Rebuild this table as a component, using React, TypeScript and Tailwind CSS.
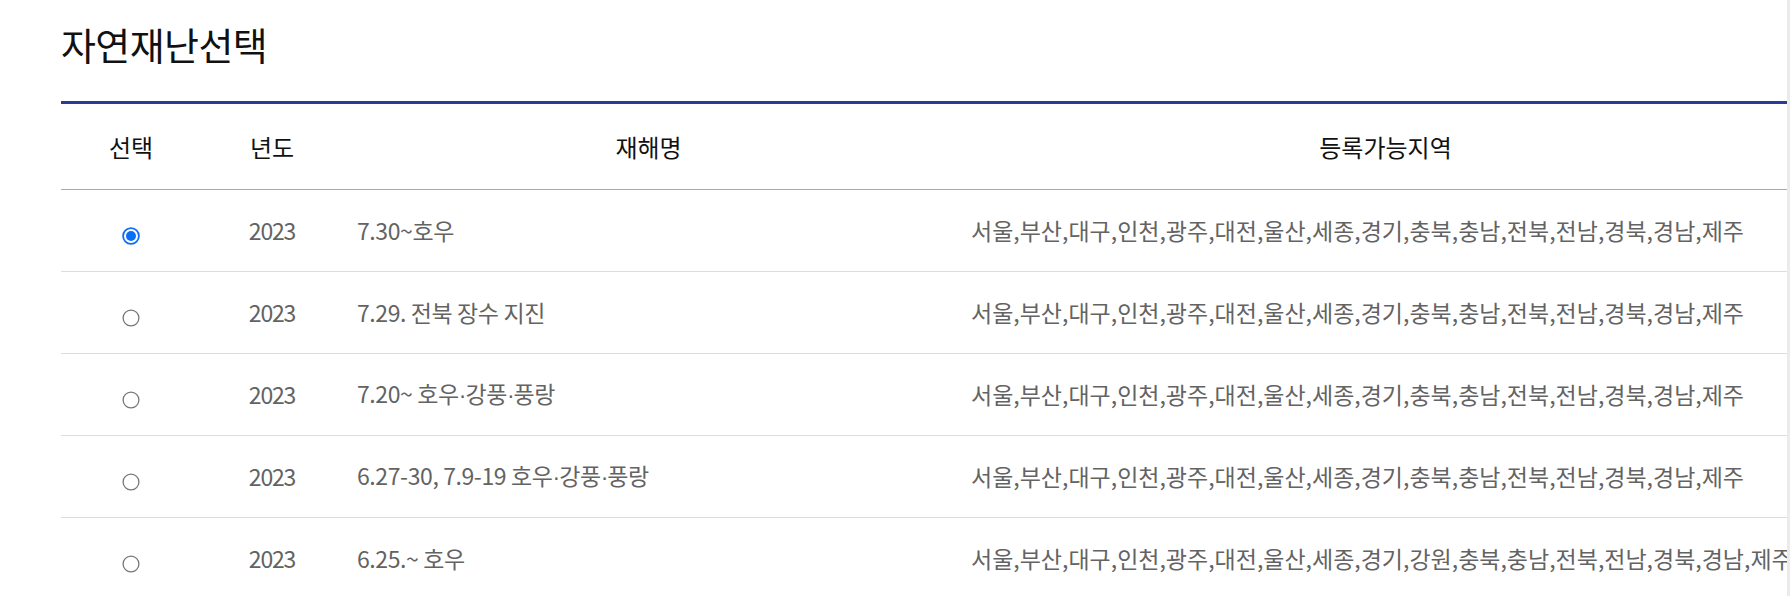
import React from "react";

const R1 = "서울,부산,대구,인천,광주,대전,울산,세종,경기,충북,충남,전북,전남,경북,경남,제주";
const R2 = "서울,부산,대구,인천,광주,대전,울산,세종,경기,강원,충북,충남,전북,전남,경북,경남,제주";

const rows = [
  { checked: true, year: "2023", name: "7.30~호우", regions: R1 },
  { checked: false, year: "2023", name: "7.29. 전북 장수 지진", regions: R1 },
  { checked: false, year: "2023", name: "7.20~ 호우·강풍·풍랑", regions: R1 },
  { checked: false, year: "2023", name: "6.27-30, 7.9-19 호우·강풍·풍랑", regions: R1 },
  { checked: false, year: "2023", name: "6.25.~ 호우", regions: R2 },
];

function Radio({ checked }: { checked: boolean }) {
  return (
    <svg width="18" height="18" viewBox="0 0 18 18" className="mt-[10px]">
      {checked ? (
        <>
          <circle cx="9" cy="9" r="7.9" fill="white" stroke="#0b6ff5" strokeWidth="1.8" />
          <circle cx="9" cy="9" r="5" fill="#0b6ff5" />
        </>
      ) : (
        <circle cx="9" cy="9" r="7.9" fill="white" stroke="#767676" strokeWidth="1.3" />
      )}
    </svg>
  );
}

function Name({ text }: { text: string }) {
  const parts = text.split("·");
  return (
    <>
      {parts.map((p, i) => (
        <React.Fragment key={i}>
          {i > 0 && <span className="font-['Liberation_Sans',sans-serif] tracking-[-1px]">·</span>}
          {p}
        </React.Fragment>
      ))}
    </>
  );
}

export default function App() {
  const font = "font-['Noto_Sans_CJK_KR','Noto_Sans',sans-serif]";
  return (
    <div className={`flex h-[596px] w-full overflow-hidden bg-white ${font}`}>
      <div className="flex-1 overflow-hidden pl-[61px]">
        <div className="h-[101px] pt-[22px]">
          <h1 className="text-[38px] leading-[44px] font-normal text-[#111] tracking-[-0.6px]">자연재난선택</h1>
        </div>
        <div className="w-[1756px] border-t-[3px] border-[#2b3a98]">
          <div className="grid h-[86px] grid-cols-[140px_142px_611px_863px] items-center border-b border-[#aaaaaa] text-[24px] text-[#111]">
            <div className="text-center">선택</div>
            <div className="text-center">년도</div>
            <div className="text-center">재해명</div>
            <div className="text-center">등록가능지역</div>
          </div>
          {rows.map((r, i) => (
            <div
              key={i}
              className="grid h-[82px] grid-cols-[140px_142px_611px_863px] items-center border-b border-[#dddddd] text-[23px] text-[#636363]"
            >
              <div className="flex justify-center">
                <Radio checked={r.checked} />
              </div>
              <div className="text-center tracking-[-1.2px]">{r.year}</div>
              <div className="pl-[14px] whitespace-nowrap tracking-[-0.4px]">
                <Name text={r.name} />
              </div>
              <div className="pl-[17px] whitespace-nowrap">{r.regions}</div>
            </div>
          ))}
        </div>
      </div>
      <div className="w-[3px] shrink-0 bg-[#ebebeb]" />
    </div>
  );
}
